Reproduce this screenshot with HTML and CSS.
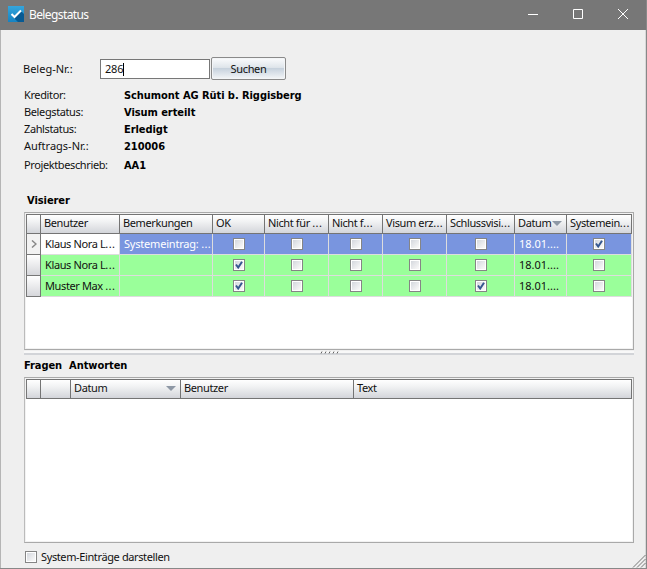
FILE: index.html
```html
<!DOCTYPE html>
<html lang="de">
<head>
<meta charset="utf-8">
<title>Belegstatus</title>
<link rel="stylesheet" href="styles.css">
</head>
<body>
<div class="window">
  <header class="titlebar">
    <svg class="logo" width="16" height="16" viewBox="0 0 16 16"><defs><linearGradient id="lg" x1="0" y1="0" x2="0" y2="1"><stop offset="0" stop-color="#35a5dc"/><stop offset="1" stop-color="#1683c2"/></linearGradient></defs><path fill="url(#lg)" d="M0 0h16v16H0z"/><path fill="#075a93" d="M13 5l3 3v8H10L4 10l3 1z"/><path fill="none" stroke="#fff" stroke-width="2" d="M3.5 8l3 3L13 4.500"/></svg>
    <h1>Belegstatus</h1>
    <div class="controls">
      <svg width="10" height="10"><path d="M0 5.500h10"/></svg>
      <svg width="10" height="10"><path d="M.5.5h9v9h-9z"/></svg>
      <svg width="10" height="10"><path d="M0 0l10 10M10 0L0 10"/></svg>
    </div>
  </header>
  <main>
    <form class="search">
      <label>Beleg-Nr.:</label>
      <div class="input"><span>286</span><i class="caret"></i></div>
      <button type="button">Suchen</button>
    </form>
    <dl class="info">
      <dt>Kreditor:</dt><dd>Schumont AG Rüti b. Riggisberg</dd>
      <dt>Belegstatus:</dt><dd>Visum erteilt</dd>
      <dt>Zahlstatus:</dt><dd>Erledigt</dd>
      <dt class="wide">Auftrags-Nr.:</dt><dd>210006</dd>
      <dt>Projektbeschrieb:</dt><dd>AA1</dd>
    </dl>
    <h2 class="t1">Visierer</h2>
    <section class="panel visierer">
      <div class="grid">
        <div class="row head"><b></b><b>Benutzer</b><b>Bemerkungen</b><b>OK</b><b>Nicht für <u>...</u></b><b>Nicht f<u>...</u></b><b>Visum erz<u>...</u></b><b>Schlussvisi<u>...</u></b><b>Datum<i class="sort"></i></b><b>Systemein<u>...</u></b></div>
        <div class="row sel"><b class="cur"><svg width="6" height="8"><path d="M1 .5l4 3.500-4 3.500"/></svg></b><b class="white">Klaus Nora L<u>...</u></b><b class="note">Systemeintrag: <u>...</u></b><b><i class="cb"></i></b><b><i class="cb"></i></b><b><i class="cb"></i></b><b><i class="cb"></i></b><b><i class="cb"></i></b><b class="date">18.01....</b><b><i class="cb on"><svg width="8" height="8"><path d="M1 3.500l2.200 3L7 .7"/></svg></i></b></div>
        <div class="row"><b class="rh"></b><b>Klaus Nora L<u>...</u></b><b></b><b><i class="cb on"><svg width="8" height="8"><path d="M1 3.500l2.200 3L7 .7"/></svg></i></b><b><i class="cb"></i></b><b><i class="cb"></i></b><b><i class="cb"></i></b><b><i class="cb"></i></b><b class="date">18.01....</b><b><i class="cb"></i></b></div>
        <div class="row"><b class="rh"></b><b>Muster Max <u>...</u></b><b></b><b><i class="cb on"><svg width="8" height="8"><path d="M1 3.500l2.200 3L7 .7"/></svg></i></b><b><i class="cb"></i></b><b><i class="cb"></i></b><b><i class="cb"></i></b><b><i class="cb on"><svg width="8" height="8"><path d="M1 3.500l2.200 3L7 .7"/></svg></i></b><b class="date">18.01....</b><b><i class="cb"></i></b></div>
      </div>
    </section>
    <div class="splitter"><svg width="19" height="3"><path d="M1 2.500l1-2M5 2.500l1-2M9 2.500l1-2M13 2.500l1-2M17 2.500l1-2"/></svg></div>
    <h2 class="t2"><span>Fragen</span><span>Antworten</span></h2>
    <section class="panel fragen">
      <div class="grid"><div class="row head"><b></b><b></b><b>Datum<i class="sort"></i></b><b>Benutzer</b><b>Text</b></div></div>
    </section>
    <label class="option"><i class="cb"></i><span>System-Einträge darstellen</span></label>
  </main>
  <svg class="grip" width="14" height="13"><path d="M1 12.500L13.500 0M5 12.500l8.500-8.500M9 12.500l4.500-4.500"/></svg>
</div>
</body>
</html>
```
FILE: styles.css
```css
* { box-sizing: border-box; }
body { margin: 0; font: 11px/14px "Noto Sans", "Open Sans", sans-serif; letter-spacing: -.38px; color: #111; }
.window { position: relative; width: 647px; height: 569px; overflow: hidden; background: #efefef; border: solid #888; border-width: 0 1px 1px 0; }
.titlebar { height: 30px; padding: 0 18px 2px 8px; display: flex; align-items: center; background: #777; color: #fff; }
.logo { display: block; }
h1 { margin: 2px 0 0 5px; font: 12px/16px "Noto Sans", sans-serif; letter-spacing: -.6px; }
.controls { margin-left: auto; display: flex; gap: 35px; }
.controls svg { fill: none; stroke: #fff; }
main { height: 538px; padding: 27px 11px 0 23px; border-left: 1px solid #b5b5b5; border-right: 1px solid #d8d8d8; }
.search { display: flex; margin: 0; height: 23px; letter-spacing: 0; }
.search label { width: 77px; padding-top: 5px; margin-left: -1px; }
.input { display: flex; align-items: center; width: 110px; height: 20px; margin: 2px 1px 0 0; padding-left: 4px; background: #fff; border: 1px solid #777; }
.input span { letter-spacing: -.2px; }
.caret { width: 1px; height: 13px; background: #000; }
button { width: 75px; height: 23px; padding: 0; font: inherit; letter-spacing: -.35px; color: #111; border: 1px solid #8a8a8a; border-radius: 2px; background: linear-gradient(#fbfcfd, #dfe5eb 45%, #c7d2dd 50%, #f4f6f8); box-shadow: inset 0 0 0 1px #f3f5f7; }
.info { display: grid; grid-template-columns: 100px 1fr; grid-template-rows: repeat(3, 17px) 19px 17px; margin: 8px 0 0; }
dt.wide { letter-spacing: 0; }
dd { margin: 0; padding-top: 1px; }
dd, h2 { font: bold 11px/14px "DejaVu Sans Condensed", sans-serif; letter-spacing: -.06px; color: #000; }
h2 { margin: 0; }
.t1 { margin: 19px 0 0 3px; height: 18px; }
.t2 { display: flex; gap: 7px; height: 18px; margin-top: 4px; }
.panel { border: 1px solid #a9a9a9; border-left-color: #bbb; background: #fff; padding: 1px; box-shadow: inset 0 0 0 1px #f2f2f2; }
.visierer { height: 138px; }
.fragen { height: 166px; }
.grid { width: 606px; border-left: 1px solid #777; }
.row { display: grid; height: 21px; background: #9aff9a; }
.visierer .row { grid-template-columns: 14px 79px 93px 52px 64px 54px 64px 68px 52px 65px; }
.fragen .row { grid-template-columns: 14px 30px 110px 173px 278px; }
.row.head { height: 20px; }
.row b { display: flex; align-items: center; justify-content: center; font-weight: normal; white-space: pre; overflow: hidden; border: solid #ddd; border-width: 0 1px 1px 0; }
.row b:nth-child(-n+3), .head b, .row .date { justify-content: flex-start; padding-left: 4px; }
.row u { text-decoration: none; letter-spacing: .35px; }
.row .date { letter-spacing: 0; }
.row .note { letter-spacing: -.2px; }
.row.head b { border: solid #747474; border-width: 1px 1px 1px 0; background: linear-gradient(#fff, #f2f3f4 35%, #d3d5da); justify-content: flex-start; padding: 0 0 2px 3px; }
.row.sel { background: #7995df; color: #fff; }
.row.sel .white { background: #fff; color: #111; }
.row .rh, .row .cur { border-color: #777; background: linear-gradient(#fff, #d6d7db); }
.row .cur { background: #f2f2f2; }
.cur svg { fill: none; stroke: #888; stroke-width: 1.5; }
.sort { margin-left: auto; margin-right: 4px; border: 5px solid transparent; border-top-color: #8e98a5; border-bottom: 0; }
.cb { flex: none; display: block; width: 12px; height: 12px; border: 1px solid #858585; background: linear-gradient(135deg, #cfd3da, #f6f6f6 80%); box-shadow: inset 0 0 0 1px #fff; padding: 1px; }
.cb svg { display: block; fill: none; stroke: #35578f; stroke-width: 2; }
.splitter { height: 4px; margin: 1px 0 4px; display: flex; justify-content: center; background: linear-gradient(#f8f8f8 50%, #d2d4d8 50%); }
.splitter svg { stroke: #666; }
.option { display: flex; align-items: center; gap: 4px; margin: 7px 0 0 1px; }
.grip { position: absolute; right: 0; bottom: 0; stroke: #777; }
```
